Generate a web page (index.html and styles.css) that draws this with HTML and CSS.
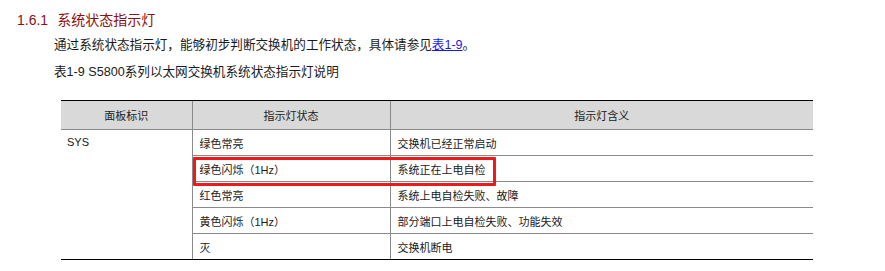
FILE: index.html
```html
<!DOCTYPE html>
<html lang="zh-CN">
<head>
<meta charset="utf-8">
<title>1.6.1 系统状态指示灯</title>
<link rel="stylesheet" href="styles.css">
</head>
<body>
<div class="page">
  <h3 class="title"><span class="num">1.6.1</span>系统状态指示灯</h3>
  <p class="para">通过系统状态指示灯，能够初步判断交换机的工作状态，具体请参见<a class="link" href="#t19">表1-9</a>。</p>
  <p class="caption" id="t19">表1-9 S5800系列以太网交换机系统状态指示灯说明</p>
  <div class="table-wrap">
    <table class="tbl">
      <colgroup>
        <col class="c1"><col class="c2"><col class="c3">
      </colgroup>
      <thead>
        <tr><th>面板标识</th><th>指示灯状态</th><th>指示灯含义</th></tr>
      </thead>
      <tbody>
        <tr><td class="first" rowspan="5">SYS</td><td>绿色常亮</td><td>交换机已经正常启动</td></tr>
        <tr><td>绿色闪烁（1Hz）</td><td>系统正在上电自检</td></tr>
        <tr><td>红色常亮</td><td>系统上电自检失败、故障</td></tr>
        <tr><td>黄色闪烁（1Hz）</td><td>部分端口上电自检失败、功能失效</td></tr>
        <tr><td>灭</td><td>交换机断电</td></tr>
      </tbody>
    </table>
    <div class="highlight"></div>
  </div>
</div>
</body>
</html>
```

FILE: styles.css
```css
html, body {
  margin: 0;
  padding: 0;
  background: #ffffff;
}
body {
  font-family: "Liberation Sans", "Noto Sans CJK SC", sans-serif;
  color: #1a1a1a;
}
.page {
  padding-top: 10px;
}
.title {
  margin: 0 0 0 17px;
  font-size: 14px;
  font-weight: normal;
  line-height: 20px;
  color: #8b1010;
}
.num {
  margin-right: 9px;
}
.para {
  margin: 6px 0 0 54px;
  font-size: 12.6px;
  line-height: 19px;
}
.link {
  color: #1a1aee;
  text-decoration: underline;
}
.caption {
  margin: 8px 0 0 54px;
  font-size: 12.6px;
  line-height: 19px;
}
.table-wrap {
  position: relative;
  margin: 18px 0 0 61px;
  width: 752px;
}
.tbl {
  border-collapse: collapse;
  width: 752px;
  table-layout: fixed;
  font-size: 11px;
}
.c1 { width: 131px; }
.c2 { width: 198px; }
.c3 { width: 423px; }
.tbl th {
  background: #d9d9d9;
  font-weight: normal;
  height: 28px;
  padding: 0;
  text-align: center;
  border-top: 1px solid #000;
  border-bottom: 1px solid #8a8a8a;
  border-left: 1px solid #8a8a8a;
  color: #222;
}
.tbl th:first-child {
  border-left: none;
}
.tbl td {
  height: 25px;
  padding: 0 0 0 7px;
  border-left: 1px solid #8a8a8a;
  border-bottom: 1px solid #8a8a8a;
  vertical-align: middle;
}
.tbl td.first {
  border-left: none;
  vertical-align: top;
  padding-top: 6px;
  padding-left: 6px;
  border-bottom: 1px solid #000;
}
.tbl tbody tr:last-child td {
  border-bottom: 1px solid #000;
}
.highlight {
  position: absolute;
  left: 132px;
  top: 57px;
  width: 297px;
  height: 23px;
  border: 3px solid #f01818;
  border-radius: 1px;
  pointer-events: none;
}
```
